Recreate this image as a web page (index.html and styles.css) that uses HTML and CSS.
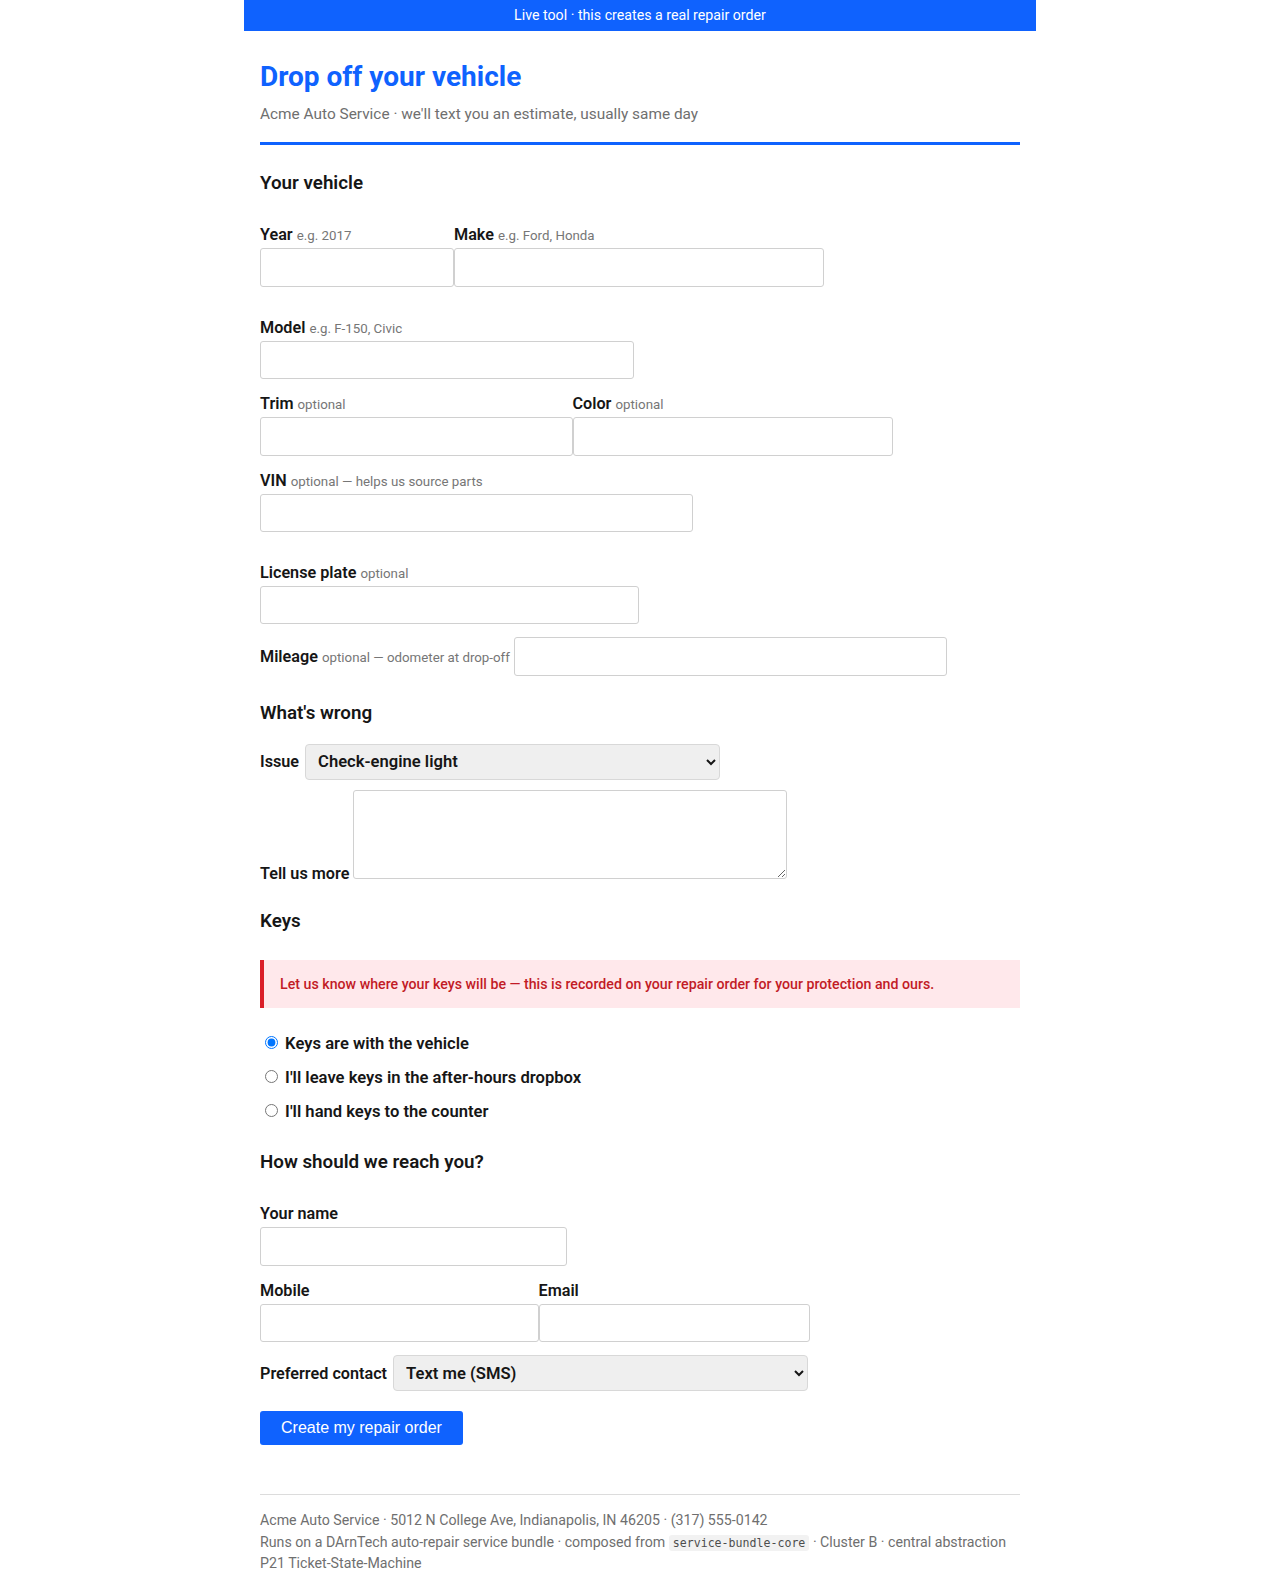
FILE: index.html
```html
<!DOCTYPE html>
<html lang="en">
<head>
    <meta charset="UTF-8">
    <title>Drop off your vehicle · Acme Auto Service</title>
    <link rel="stylesheet" href="styles.css">
</head>
<body>
    <div class="page">
        <div class="liveBar">Live tool · this creates a real repair order</div>

        <main class="sheet">
            <header class="intro">
                <h1>Drop off your vehicle</h1>
                <p>Acme Auto Service · we'll text you an estimate, usually same day</p>
            </header>

            <form class="dropForm" onsubmit="return false;">
                <!-- 1、vehicle -->
                <h2 class="sectionTitle firstTitle">Your vehicle</h2>
                <div class="row rowYear">
                    <label class="field">
                        <span class="cap">Year <small class="hint">e.g. 2017</small></span>
                        <input type="text" class="box wYear">
                    </label>
                    <label class="field">
                        <span class="cap">Make <small class="hint">e.g. Ford, Honda</small></span>
                        <input type="text" class="box wMake">
                    </label>
                </div>
                <div class="row rowModel">
                    <label class="field">
                        <span class="cap">Model <small class="hint">e.g. F-150, Civic</small></span>
                        <input type="text" class="box wModel">
                    </label>
                </div>
                <div class="row rowTight">
                    <label class="field">
                        <span class="cap">Trim <small class="hint">optional</small></span>
                        <input type="text" class="box wTrim">
                    </label>
                    <label class="field">
                        <span class="cap">Color <small class="hint">optional</small></span>
                        <input type="text" class="box wColor">
                    </label>
                </div>
                <div class="row rowTight">
                    <label class="field">
                        <span class="cap">VIN <small class="hint">optional — helps us source parts</small></span>
                        <input type="text" class="box wWide">
                    </label>
                </div>
                <div class="row rowPlate">
                    <label class="field">
                        <span class="cap">License plate <small class="hint">optional</small></span>
                        <input type="text" class="box wPlate">
                    </label>
                </div>
                <label class="inlineRow rowMileage">
                    <span class="cap">Mileage <small class="hint">optional — odometer at drop-off</small></span>
                    <input type="text" class="box wWide">
                </label>

                <!-- 2、problem -->
                <h2 class="sectionTitle wrongTitle">What's wrong</h2>
                <label class="inlineRow rowIssue">
                    <span class="cap">Issue</span>
                    <select class="pick">
                        <option>Check-engine light</option>
                        <option>Brakes</option>
                        <option>Oil change / maintenance</option>
                        <option>Noise or vibration</option>
                        <option>Something else</option>
                    </select>
                </label>
                <label class="inlineRow rowMore">
                    <span class="cap">Tell us more</span>
                    <textarea class="box note"></textarea>
                </label>

                <!-- 3、keys -->
                <h2 class="sectionTitle keysTitle">Keys</h2>
                <div class="keysNote">Let us know where your keys will be — this is recorded on your repair order for your protection and ours.</div>
                <div class="keyChoices">
                    <label class="choice"><input type="radio" name="keys" checked> Keys are with the vehicle</label>
                    <label class="choice"><input type="radio" name="keys"> I'll leave keys in the after-hours dropbox</label>
                    <label class="choice"><input type="radio" name="keys"> I'll hand keys to the counter</label>
                </div>

                <!-- 4、contact -->
                <h2 class="sectionTitle reachTitle">How should we reach you?</h2>
                <div class="row rowName">
                    <label class="field">
                        <span class="cap">Your name</span>
                        <input type="text" class="box wName">
                    </label>
                </div>
                <div class="row rowTight">
                    <label class="field">
                        <span class="cap">Mobile</span>
                        <input type="tel" class="box wMobile">
                    </label>
                    <label class="field">
                        <span class="cap">Email</span>
                        <input type="email" class="box wEmail">
                    </label>
                </div>
                <label class="inlineRow rowContact">
                    <span class="cap">Preferred contact</span>
                    <select class="pick">
                        <option>Text me (SMS)</option>
                        <option>Call me</option>
                        <option>Email me</option>
                    </select>
                </label>

                <button type="submit" class="sendBtn">Create my repair order</button>
            </form>

            <footer class="shopInfo">
                <div>Acme Auto Service · 5012 N College Ave, Indianapolis, IN 46205 · (317) 555-0142</div>
                <div><span>Runs on a DArnTech auto-repair service bundle · composed from</span> <code>service-bundle-core</code> <span>· Cluster B · central abstraction</span> <span>P21 Ticket-State-Machine</span></div>
            </footer>
        </main>
    </div>
</body>
</html>
```
FILE: styles.css
```css
/* page shell */
body { margin: 0; background: #fff; color: #161616; font-family: Roboto, "Noto Sans", sans-serif; }
.page { width: 792px; margin: 0 auto; }

.liveBar { height: 31px; line-height: 31px; background: #0f62fe; color: #fff; font-size: 14.2px; text-align: center; }

.sheet { padding: 0 16px 40px; }

/* heading block with the blue rule */
.intro { padding-bottom: 18px; border-bottom: 3px solid #0f62fe; }
.intro h1 { margin: 29px 0 0; font-size: 28px; line-height: 34px; font-weight: 700; color: #0f62fe; }
.intro p { margin: 10px 0 0; font-size: 15.4px; line-height: 20px; color: #6f6f6f; }

/* section titles */
.sectionTitle { margin: 0; font-size: 18.8px; line-height: 24px; font-weight: 600; }
.firstTitle { margin-top: 26px; }
.wrongTitle { margin-top: 25.5px; }
.keysTitle { margin-top: 30.6px; }
.reachTitle { margin-top: 25.7px; }

/* label on top, input below */
.row { display: flex; }
.rowYear { margin-top: 30px; }
.rowModel { margin-top: 31px; }
.rowTight { margin-top: 15px; }
.rowPlate { margin-top: 30.5px; }
.rowName { margin-top: 30px; }
.field { display: flex; flex-direction: column; }

.cap { font-size: 16.2px; line-height: 23px; font-weight: 600; white-space: nowrap; }
.field .cap { line-height: 20px; padding-bottom: 3px; }
.hint { font-size: 13.3px; line-height: 1; font-weight: 400; color: #767676; }

.box { box-sizing: border-box; height: 38.5px; margin: 0; padding: 0 10px; border: 1px solid #d0d0d0; border-radius: 3px; background: #fff; font: 16px Roboto, sans-serif; }
.wYear { width: 194px; }
.wMake { width: 369.6px; }
.wModel { width: 374.4px; }
.wTrim { width: 312.5px; }
.wColor { width: 320px; }
.wWide { width: 433.4px; }
.wPlate { width: 379.4px; }
.wName { width: 307.4px; }
.wMobile { width: 278.5px; }
.wEmail { width: 271.2px; }

/* label and control on one line */
.inlineRow { display: flex; align-items: center; gap: 4px; }
.rowMileage { margin-top: 13px; }
.rowIssue { margin-top: 19.3px; gap: 6px; }
.rowMore { margin-top: 10.3px; align-items: flex-end; }
.rowMore .cap { line-height: 11px; }
.rowContact { margin-top: 13.3px; gap: 6px; }

.pick { box-sizing: border-box; width: 415px; height: 35.4px; margin: 0; padding: 0 6px 0 8px; border: 1px solid #d8d8d8; border-radius: 4px; background-color: #efefef; color: #161616; font: 600 16.6px Roboto, sans-serif; }

.note { width: 433.4px; height: 88.7px; padding: 8px 10px; resize: vertical; }

/* keys warning and choices */
.keysNote { margin-top: 26.7px; padding: 14px 16px; border-left: 4px solid #da1e28; background: #ffe8eb; color: #c21b26; font-size: 14.2px; line-height: 20px; font-weight: 500; }

.keyChoices { display: flex; flex-direction: column; gap: 10px; margin-top: 24.5px; }
.choice { font-size: 16.6px; line-height: 24px; font-weight: 600; }

.sendBtn { display: block; height: 34.4px; margin-top: 20px; padding: 0 21px; border: 0; border-radius: 3px; background: #0f62fe; color: #fff; font: 16px "Liberation Sans", Arial, sans-serif; cursor: pointer; }

/* shop details */
.shopInfo { margin-top: 48.6px; padding-top: 15px; border-top: 1px solid #dcdcdc; color: #6f6f6f; font-size: 14.2px; line-height: 21.7px; }
.shopInfo code { padding: 1px 4px; border-radius: 3px; background: #f2f2f2; color: #4d4d4d; font: 11.6px "DejaVu Sans Mono", monospace; }
```
